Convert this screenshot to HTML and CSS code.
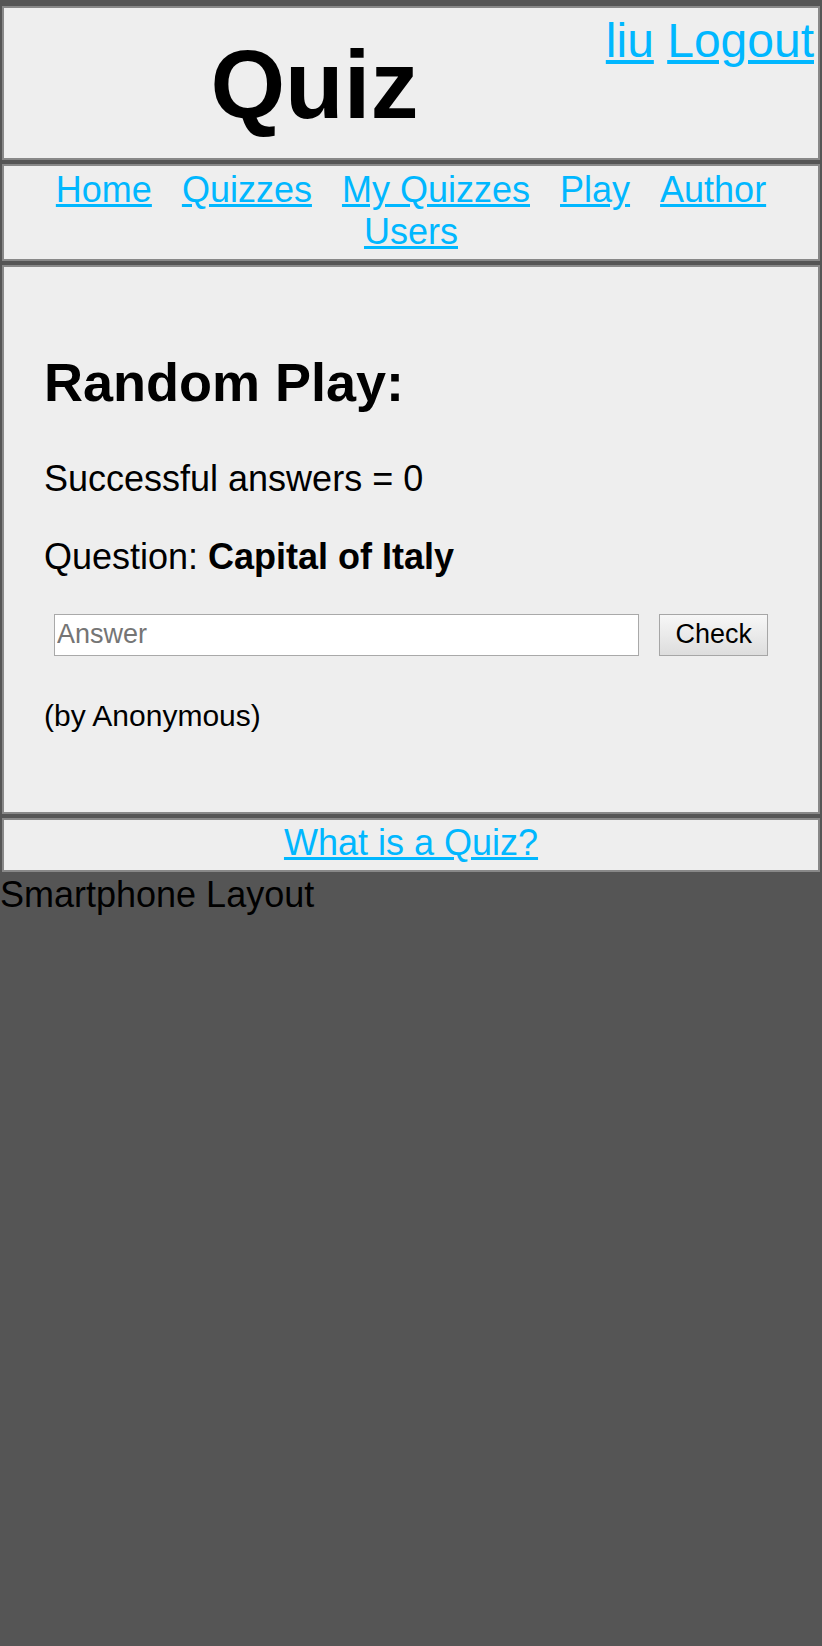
FILE: index.html
```html
<!DOCTYPE html>
<html>
<head>
<meta charset="utf-8">
<title>Quiz</title>
<link rel="stylesheet" href="styles.css">
</head>
<body>
<div class="page">
  <header class="box header">
    <h1 class="title">Quiz</h1>
    <div class="user">
      <a href="#">liu</a> <a href="#">Logout</a>
    </div>
  </header>
  <nav class="box nav">
    <a href="#">Home</a> <a href="#">Quizzes</a> <a href="#">My Quizzes</a> <a href="#">Play</a> <a href="#">Author</a> <a href="#">Users</a>
  </nav>
  <main class="box main">
    <h2 class="heading">Random Play:</h2>
    <p class="line">Successful answers = 0</p>
    <p class="line">Question: <b>Capital of Italy</b></p>
    <form class="answer-form">
      <input class="answer" type="text" placeholder="Answer">
      <button class="check" type="button">Check</button>
    </form>
    <p class="author">(by Anonymous)</p>
  </main>
  <footer class="box footer">
    <a href="#">What is a Quiz?</a>
  </footer>
</div>
<div class="layout-note">Smartphone Layout</div>
</body>
</html>
```

FILE: styles.css
```css
html, body {
  margin: 0;
  padding: 0;
}
body {
  background: #555555;
  font-family: "Liberation Sans", Arial, sans-serif;
  font-size: 36px;
  color: #000;
  min-height: 1646px;
}
a {
  color: #00b7ff;
}
.page {
  display: flex;
  flex-direction: column;
  gap: 4px;
  padding: 6px 2px 2px;
}
.box {
  background: #eeeeee;
  border: 2px solid #888888;
}
.header {
  display: flex;
  align-items: flex-start;
  height: 150px;
}
.title {
  flex: 1;
  margin: 22px 0 0;
  padding-left: 19px;
  text-align: center;
  font-size: 96px;
  font-weight: bold;
  line-height: normal;
}
.user {
  font-size: 48px;
  padding: 5px 4px 0 0;
  line-height: normal;
}
.nav {
  text-align: center;
  padding: 3px 0 6px;
  line-height: normal;
}
.nav a {
  margin: 0 10px;
}
.main {
  padding: 39px 40px 43px;
}
.heading {
  font-size: 54px;
  font-weight: bold;
  margin: 44.8px 0;
}
.line {
  margin: 36px 0;
}
.answer-form {
  display: flex;
  gap: 20px;
  margin: 36px 10px 43px;
}
.answer {
  flex: 1;
  height: 42px;
  box-sizing: border-box;
  border: 1px solid #a9a9a9;
  background: #fff;
  font-family: "Liberation Sans", Arial, sans-serif;
  font-size: 27px;
  padding: 0 2px;
  margin: 0;
}
.answer::placeholder {
  color: #757575;
}
.check {
  height: 42px;
  box-sizing: border-box;
  border: 1px solid #a6a6a6;
  background: linear-gradient(#f7f7f7, #dddddd);
  font-family: "Liberation Sans", Arial, sans-serif;
  font-size: 27px;
  color: #000;
  padding: 0 15px;
  margin: 0;
}
.author {
  font-size: 30px;
  margin: 0 0 36px;
}
.footer {
  text-align: center;
  padding: 2px 0 6px;
  line-height: normal;
}
.layout-note {
  font-size: 36px;
  line-height: normal;
}
```
